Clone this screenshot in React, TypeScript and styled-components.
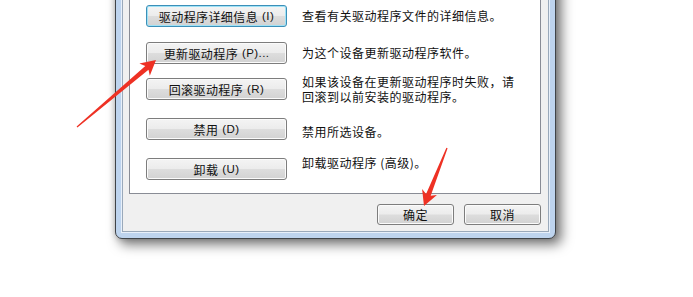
import React, { FC } from 'react';
import styled, { createGlobalStyle } from 'styled-components';

const GlobalStyle = createGlobalStyle`
  html, body {
    margin: 0;
    padding: 0;
    background: #ffffff;
  }
  body {
    font-family: "Noto Sans CJK SC", "Liberation Sans", sans-serif;
  }
`;

const Page = styled.div`
  position: relative;
  width: 693px;
  height: 297px;
  overflow: hidden;
  background: #ffffff;
  padding-left: 115px;
  box-sizing: border-box;
`;

const Window = styled.div`
  width: 441px;
  margin-top: -40px;
  box-sizing: border-box;
  border: 1px solid #404448;
  border-radius: 7px;
  background: #bed4ee;
  padding: 6px 6px 6px 6px;
  box-shadow: 5px 5px 12px 1px rgba(0, 0, 0, 0.5), 0 0 6px rgba(0, 0, 0, 0.2);
`;

const Dialog = styled.div`
  background: #f0f0f0;
  border: 1px solid #9aa9ba;
  box-shadow: 0 0 0 1px #e8f0fa;
  padding: 8px 7px 6px 6px;
`;

const Panel = styled.div`
  background: #ffffff;
  border: 1px solid #898c95;
  padding: 28px 0 13px 16px;
`;

const Row = styled.div<{ $top: number }>`
  display: flex;
  align-items: flex-start;
  gap: 15px;
  margin-top: ${p => p.$top}px;
  &:first-child {
    margin-top: 0;
  }
`;

const Button = styled.div<{ $focused?: boolean; $w?: number }>`
  flex: none;
  width: ${p => p.$w ?? 141}px;
  height: ${p => (p.$w ? 21 : 22)}px;
  box-sizing: border-box;
  display: flex;
  align-items: center;
  justify-content: center;
  border: 1px solid ${p => (p.$focused ? '#3c8fb8' : '#7d7d7d')};
  border-radius: 3px;
  background: linear-gradient(#f4f4f4 0%, #ececec 48%, #dddddd 52%, #d2d2d2 100%);
  box-shadow: inset 0 0 0 1px ${p => (p.$focused ? '#9fe2f6' : '#fbfbfb')};
  font-size: 12px;
  letter-spacing: 0.4px;
  color: #111;
  white-space: nowrap;
`;

const Key = styled.span`
  font-family: "Liberation Sans", sans-serif;
  font-size: 11.5px;
  margin-left: 4px;
`;

const Desc = styled.div<{ $dy: number }>`
  margin-top: ${p => p.$dy}px;
  font-size: 12px;
  line-height: 15px;
  letter-spacing: 0.5px;
  color: #111;
  white-space: nowrap;
`;

const Footer = styled.div`
  display: flex;
  justify-content: flex-end;
  gap: 10px;
  padding-top: 10px;
`;

const Arrows = styled.svg`
  position: absolute;
  left: 0;
  top: 0;
  pointer-events: none;
`;

const rows = [
  { top: 0, label: '驱动程序详细信息', key: '(I)', desc: ['查看有关驱动程序文件的详细信息。'], dy: 3, focused: true },
  { top: 15, label: '更新驱动程序', key: '(P)...', desc: ['为这个设备更新驱动程序软件。'], dy: 3 },
  { top: 14, label: '回滚驱动程序', key: '(R)', desc: ['如果该设备在更新驱动程序时失败，请', '回滚到以前安装的驱动程序。'], dy: -4 },
  { top: 14, label: '禁用', key: '(D)', desc: ['禁用所选设备。'], dy: 6 },
  { top: 18, label: '卸载', key: '(U)', desc: ['卸载驱动程序 (高级)。'], dy: -3 },
];

const App: FC = () => {
  return (
    <>
      <GlobalStyle />
      <Page>
        <Window>
          <Dialog>
            <Panel>
              {rows.map(r => (
                <Row key={r.label} $top={r.top}>
                  <Button $focused={r.focused}>
                    {r.label}
                    <Key>{r.key}</Key>
                  </Button>
                  <Desc $dy={r.dy}>
                    {r.desc.map((line, i) => (
                      <div key={i}>{line}</div>
                    ))}
                  </Desc>
                </Row>
              ))}
            </Panel>
            <Footer>
              <Button $w={77}>确定</Button>
              <Button $w={77}>取消</Button>
            </Footer>
          </Dialog>
        </Window>
        <Arrows width="693" height="297" viewBox="0 0 693 297">
          <polygon
            fill="#ee3124"
            points="156,60 149.8,75.8 148.5,69.7 77.4,127.5 76.6,126.5 145.3,65.9 139.4,63.6"
          />
          <polygon
            fill="#ee3124"
            points="424,206 436.9,195.1 430.7,195.7 447.6,148.2 446.4,147.8 426.1,193.9 422.1,189.1"
          />
        </Arrows>
      </Page>
    </>
  );
};

export default App;
